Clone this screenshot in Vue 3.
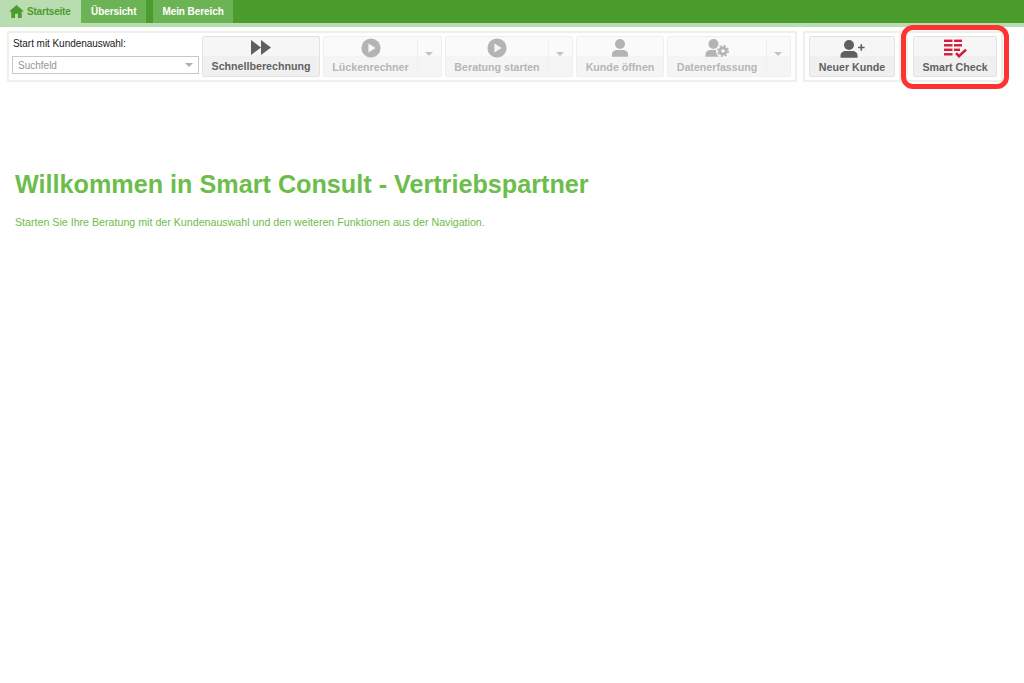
<script setup>
const tabs = [
  { label: 'Startseite', active: true, home: true },
  { label: 'Übersicht' },
  { label: 'Mein Bereich' }
]
const buttons = [
  { label: 'Lückenrechner', icon: 'play', width: 119, split: true },
  { label: 'Beratung starten', icon: 'play', width: 128, split: true },
  { label: 'Kunde öffnen', icon: 'user', width: 88 },
  { label: 'Datenerfassung', icon: 'gear', width: 124, split: true }
]
</script>

<template>
  <div class="page">
    <nav class="nav">
      <a v-for="t in tabs" :key="t.label" class="tab" :class="{ active: t.active }">
        <svg v-if="t.home" class="home" viewBox="0 0 16 14"><path d="M8 0 L16 7 H13.6 V14 H9.6 V9.4 H6.4 V14 H2.4 V7 H0 Z" fill="#4a9c2d"/></svg>
        {{ t.label }}
      </a>
    </nav>
    <div class="strip"></div>

    <div class="toolbar">
      <section class="panel main-panel">
        <div class="picker">
          <label class="picker-label">Start mit Kundenauswahl:</label>
          <div class="select"><span>Suchfeld</span><i class="caret"></i></div>
        </div>
        <div class="btn">
          <div class="btn-top">
            <svg class="ico" viewBox="0 0 20 15" width="20" height="15"><path d="M0 0 L10 7.5 L0 15 Z M10 0 L20 7.5 L10 15 Z" fill="#5f5f5f"/></svg>
          </div>
          <div class="btn-label">Schnellberechnung</div>
        </div>
        <div v-for="b in buttons" :key="b.label" class="btn disabled" :style="{ width: b.width + 'px' }">
          <div class="btn-main">
            <div class="btn-top">
              <svg v-if="b.icon === 'play'" viewBox="0 0 20 20" width="20" height="20"><circle cx="10" cy="10" r="9.6" fill="#b4b4b4"/><path d="M7.4 5.6 L14.6 10 L7.4 14.4 Z" fill="#f6f6f6"/></svg>
              <svg v-else-if="b.icon === 'user'" viewBox="0 0 18 20" width="18" height="20"><circle cx="9" cy="6" r="5" fill="#b4b4b4"/><path d="M1 18.8 V16.4 C1 13.6 3.4 12 6 12 H12 C14.6 12 17 13.6 17 16.4 V18.8 Z" fill="#b4b4b4"/></svg>
              <svg v-else viewBox="0 0 26 20" width="26" height="20"><circle cx="9.5" cy="6" r="5" fill="#b4b4b4"/><path d="M1.5 18.8 V16.4 C1.5 13.6 3.9 12 6.5 12 H12.5 C15.1 12 17.5 13.6 17.5 16.4 V18.8 Z" fill="#b4b4b4"/><circle cx="19" cy="13" r="7" fill="#fafafa"/><circle cx="19" cy="13" r="3.2" fill="none" stroke="#b4b4b4" stroke-width="2.8"/><circle cx="19" cy="13" r="5.2" fill="none" stroke="#b4b4b4" stroke-width="1.6" stroke-dasharray="2.1 1.98"/></svg>
            </div>
            <div class="btn-label">{{ b.label }}</div>
          </div>
          <div v-if="b.split" class="split"><i class="caret"></i></div>
        </div>
      </section>

      <section class="panel small-panel">
        <div class="btn new">
          <div class="btn-top">
            <svg viewBox="0 0 25 20" width="25" height="20"><circle cx="9" cy="7" r="5" fill="#5f5f5f"/><path d="M0.5 19.8 V17.4 C0.5 14.6 3 13 5.5 13 H12.5 C15 13 17.5 14.6 17.5 17.4 V19.8 Z" fill="#5f5f5f"/><path d="M18 9.5 H24.6 M21.3 6.2 V12.8" stroke="#5f5f5f" stroke-width="1.6" fill="none"/></svg>
          </div>
          <div class="btn-label">Neuer Kunde</div>
        </div>
      </section>

      <section class="panel check-panel">
        <div class="btn check">
          <div class="btn-top">
            <svg viewBox="0 0 23 20" width="23" height="20"><g fill="#d8193c"><rect x="0" y="1.6" width="8.5" height="2.4"/><rect x="10" y="1.6" width="8" height="2.4"/><rect x="0" y="6.1" width="8.5" height="2.4"/><rect x="10" y="6.1" width="8" height="2.4"/><rect x="0" y="10.6" width="8.5" height="2.4"/><rect x="10" y="10.6" width="6" height="2.4"/><rect x="0" y="15.1" width="8.5" height="2.4"/></g><path d="M12 15.2 L15 18.2 L22 11.6" fill="none" stroke="#d8193c" stroke-width="2.6"/></svg>
          </div>
          <div class="btn-label">Smart Check</div>
        </div>
        <div class="highlight"></div>
      </section>
    </div>

    <main class="content">
      <h1>Willkommen in Smart Consult - Vertriebspartner</h1>
      <p>Starten Sie Ihre Beratung mit der Kundenauswahl und den weiteren Funktionen aus der Navigation.</p>
    </main>
  </div>
</template>

<style>
html, body { margin: 0; background: #fff; }
</style>

<style scoped>
.page {
  width: 1024px;
  height: 683px;
  overflow: hidden;
  background: #fff;
  font-family: "Liberation Sans", Arial, sans-serif;
}
.nav {
  display: flex;
  gap: 7px;
  height: 23px;
  background: #4a9c2d;
}
.tab {
  display: flex;
  align-items: center;
  gap: 3px;
  height: 23px;
  padding: 0 9px 1px;
  box-sizing: border-box;
  background: #6cb355;
  color: #fff;
  font-size: 10px;
  font-weight: bold;
  letter-spacing: -0.08px;
}
.tab:nth-child(2) { padding: 0 10px 1px; }
.tab.active {
  width: 81px;
  margin-right: -7px;
  padding: 0 0 1px 9px;
  background: #b9dcb1;
  color: #4a9c2d;
  letter-spacing: -0.2px;
}
.home { width: 15px; height: 13px; }
.strip { height: 4px; background: #b9dcb1; }
.toolbar {
  display: flex;
  align-items: flex-start;
  padding: 4px 0 0 7px;
}
.panel {
  position: relative;
  display: flex;
  box-sizing: border-box;
  height: 51px;
  padding: 3px;
  border: 2px solid #ebf3e9;
  gap: 3px;
}
.main-panel { width: 790px; }
.small-panel { width: 98px; margin-left: 6px; padding-left: 4px; }
.check-panel { width: 97px; margin-left: 5px; padding-left: 5px; }
.picker {
  flex: none;
  width: 187px;
}
.picker-label {
  display: block;
  margin: 2px 0 6px 1px;
  font-size: 10px;
  line-height: 12px;
  letter-spacing: -0.05px;
  color: #222;
}
.select {
  display: flex;
  align-items: center;
  justify-content: space-between;
  box-sizing: border-box;
  width: 187px;
  height: 18px;
  padding: 0 5px;
  border: 1px solid #c8c8c8;
  color: #959595;
  font-size: 10px;
}
.caret {
  display: block;
  width: 0;
  height: 0;
  border-left: 4px solid transparent;
  border-right: 4px solid transparent;
  border-top: 4px solid #b0b0b0;
}
.btn {
  display: flex;
  flex-direction: column;
  flex: none;
  box-sizing: border-box;
  width: 118px;
  height: 41px;
  border: 1px solid #e2e2e2;
  border-radius: 2px;
  background: linear-gradient(#f6f6f6 19px, #f0f0f0 19px);
  overflow: hidden;
}
.btn-top {
  display: flex;
  align-items: center;
  justify-content: center;
  height: 19px;
  padding-top: 1px;
}
.btn-label {
  flex: 1;
  text-align: center;
  font-size: 10.67px;
  font-weight: bold;
  line-height: 20px;
  color: #616161;
  white-space: nowrap;
}
.disabled {
  flex-direction: row;
  background: linear-gradient(#fafafa 19px, #f5f5f5 19px);
  border-color: #efefef;
}
.btn-main { flex: 1; display: flex; flex-direction: column; min-width: 0; }
.disabled .btn-label { color: #b6b6b6; }
.split {
  flex: none;
  width: 24px;
  margin: 2px 0 3px;
  display: flex;
  align-items: center;
  justify-content: center;
  padding: 0 2px 4px 0;
  border-left: 1px solid #efefef;
  box-sizing: border-box;
}
.split .caret { border-top-color: #c4c4c4; }
.new { width: 86px; }
.check { width: 84px; }
.highlight {
  position: absolute;
  left: -7px;
  top: -8px;
  box-sizing: border-box;
  width: 108px;
  height: 64px;
  border: 5px solid #ff3333;
  border-radius: 12px;
}
.content { padding: 87px 15px 0; }
h1 {
  margin: 0;
  font-size: 25.2px;
  line-height: 30px;
  font-weight: bold;
  color: #6cbd4b;
}
p {
  margin: 16px 0 0;
  font-size: 10.67px;
  line-height: 14px;
  color: #6cbd4b;
}
</style>
